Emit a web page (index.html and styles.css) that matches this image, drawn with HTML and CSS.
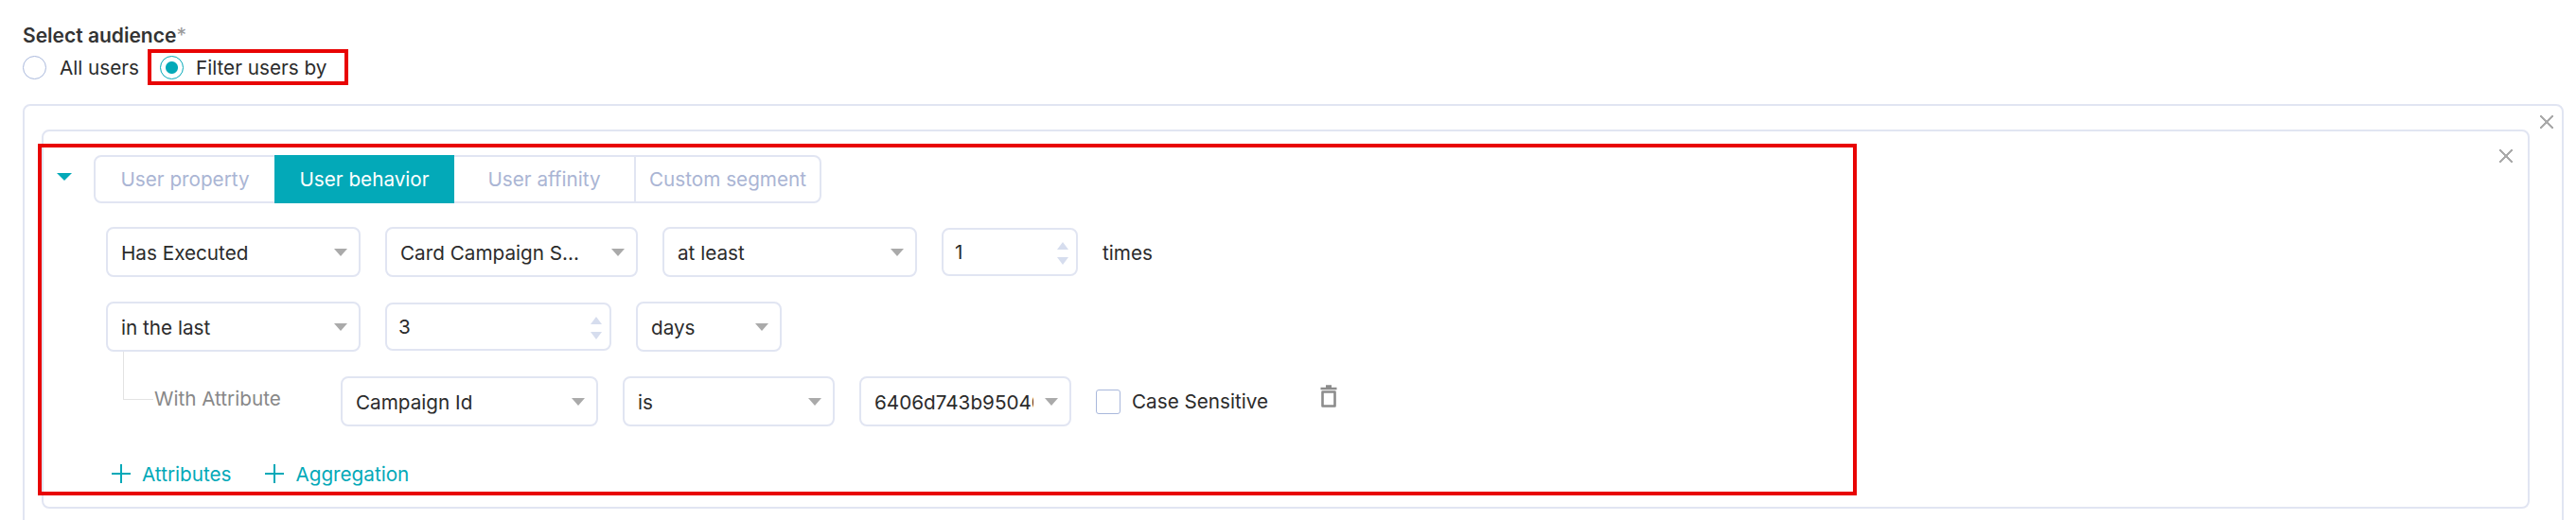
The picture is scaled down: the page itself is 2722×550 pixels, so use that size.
FILE: index.html
```html
<!DOCTYPE html>
<html lang="en">
<head>
  <meta charset="UTF-8" />
  <title>Select audience</title>
  <link rel="stylesheet" href="styles.css">
</head>
<body>
  <div class="page">

    <div class="field-label">Select audience<span class="required">*</span></div>
    <div class="radio-row">
      <div class="radio-option">
        <span class="radio"></span>
        <span>All users</span>
      </div>
      <div class="radio-option selected">
        <span class="radio checked"></span>
        <span>Filter users by</span>
      </div>
    </div>

    <div class="outer-box">
      <span class="close close-outer"></span>

      <div class="inner-box">
        <span class="close close-inner"></span>
        <div class="highlight"></div>

        <div class="rule-head">
          <span class="caret"></span>
          <div class="tabs">
            <div class="tab tab-a">User property</div>
            <div class="tab tab-b active">User behavior</div>
            <div class="tab tab-c">User affinity</div>
            <div class="tab tab-d">Custom segment</div>
          </div>
        </div>

        <!-- Filter rows -->
        <div class="rule-body">
          <div class="row">
            <div class="select w-269"><span class="value">Has Executed</span></div>
            <div class="select w-267"><span class="value">Card Campaign S...</span></div>
            <div class="select w-269"><span class="value">at least</span></div>
            <div class="number w-144"><span>1</span><span class="stepper"></span></div>
            <span class="suffix">times</span>
          </div>
          <div class="row">
            <div class="select w-269"><span class="value">in the last</span></div>
            <div class="number w-239"><span>3</span><span class="stepper"></span></div>
            <div class="select w-154"><span class="value">days</span></div>
          </div>
          <div class="row row-attr">
            <span class="connector"></span>
            <span class="attr-label">With Attribute</span>
            <div class="select w-272"><span class="value">Campaign Id</span></div>
            <div class="select w-224"><span class="value">is</span></div>
            <div class="select w-224"><span class="value clipped">6406d743b95040</span></div>
            <div class="check-option">
              <span class="checkbox"></span>
              <span>Case Sensitive</span>
            </div>
            <svg class="trash" width="18" height="24" viewBox="0 0 18 24">
              <path d="M6 1.5h6M0.5 4h17" stroke="#8c8c8c" stroke-width="2.4" fill="none" />
              <path d="M2.5 7.5h13v15h-13z" stroke="#8c8c8c" stroke-width="2.6" fill="none" stroke-linejoin="round" />
            </svg>
          </div>
        </div>

        <div class="add-row">
          <div class="add-link"><span class="plus"></span>Attributes</div>
          <div class="add-link"><span class="plus"></span>Aggregation</div>
        </div>
      </div>
    </div>

  </div>
</body>
</html>
```

FILE: styles.css
```css
body {
  margin: 0;
  background: #fff;
  font-family: 'Inter', sans-serif;
  font-size: 20.7px;
  color: #2b2b2b;
}

.page {
  height: 550px;
  overflow: hidden;
  box-sizing: border-box;
  padding: 25px 13px 0 24px;
}

.field-label {
  height: 26px;
  line-height: 26px;
  font-size: 21px;
  font-weight: 600;
  color: #333;
}

.required {
  color: #999;
  font-weight: 400;
}

.radio-row {
  display: flex;
  align-items: center;
  margin-top: 1px;
  height: 38px;
}

.radio-option {
  display: flex;
  align-items: center;
  gap: 14px;
  width: 132px;
  height: 38px;
  box-sizing: border-box;
  white-space: nowrap;
}

.radio-option.selected {
  gap: 13px;
  width: 212px;
  padding-left: 9px;
  border: 4px solid #e80404;
}

.radio {
  width: 25px;
  height: 25px;
  box-sizing: border-box;
  border: 1px solid #a9b8dc;
  border-radius: 50%;
  background: #fff;
}

.radio.checked {
  border-color: #03a9b8;
  background: radial-gradient(circle, #03a9b8 0 6px, #fff 7px);
}

.outer-box {
  position: relative;
  box-sizing: border-box;
  height: 600px;
  margin-top: 20px;
  padding: 25px 34px 0 18px;
  border: 2px solid #e1e5f2;
  border-radius: 8px;
}

.inner-box {
  position: relative;
  box-sizing: border-box;
  height: 401px;
  padding: 25px 0 0 14px;
  border: 2px solid #e1e5f2;
  border-radius: 8px;
}

.close {
  position: absolute;
  width: 14px;
  height: 14px;
  background:
    linear-gradient(45deg, transparent 46%, #aaa 46% 54%, transparent 54%),
    linear-gradient(-45deg, transparent 46%, #aaa 46% 54%, transparent 54%);
}

.close-outer {
  top: 10px;
  right: 9px;
}

.close-inner {
  top: 19px;
  right: 16px;
}

.highlight {
  position: absolute;
  left: -6px;
  top: 13px;
  width: 1922px;
  height: 372px;
  box-sizing: border-box;
  border: 4px solid #e80404;
  pointer-events: none;
}

.rule-head {
  display: flex;
  align-items: flex-start;
}

.caret {
  width: 0;
  height: 0;
  margin: 19px 23px 0 0;
  border-left: 8px solid transparent;
  border-right: 8px solid transparent;
  border-top: 8px solid #03a9b8;
}

.tabs {
  display: flex;
  height: 51px;
  box-sizing: border-box;
  border: 2px solid #e1e5f2;
  border-radius: 8px;
}

.tab {
  display: flex;
  align-items: center;
  justify-content: center;
  box-sizing: border-box;
  color: #aab5d4;
  white-space: nowrap;
}

.tab-a { width: 189px; }
.tab-b { width: 190px; }
.tab-c { width: 192px; border-right: 2px solid #e1e5f2; }
.tab-d { width: 194px; }

.tab.active {
  margin: -2px 0;
  background: #03a9b8;
  color: #fff;
}

.rule-body {
  display: flex;
  flex-direction: column;
  gap: 26px;
  margin: 25px 0 0 52px;
}

.row {
  position: relative;
  display: flex;
  align-items: center;
  gap: 26px;
  height: 53px;
}

.select,
.number {
  position: relative;
  display: flex;
  align-items: center;
  box-sizing: border-box;
  height: 53px;
  padding: 2px 0 0 14px;
  border: 2px solid #e1e5f2;
  border-radius: 8px;
}

.number {
  height: 51px;
  padding: 0 0 0 12px;
}

.select::after {
  content: "";
  position: absolute;
  top: 21px;
  right: 12px;
  border-left: 7px solid transparent;
  border-right: 7px solid transparent;
  border-top: 8px solid #aaa;
}

.stepper {
  position: absolute;
  top: 13px;
  right: 8px;
  width: 0;
  height: 0;
  border-left: 6px solid transparent;
  border-right: 6px solid transparent;
  border-bottom: 8px solid #d6ddee;
}

.stepper::after {
  content: "";
  position: absolute;
  top: 16px;
  left: -6px;
  border-left: 6px solid transparent;
  border-right: 6px solid transparent;
  border-top: 8px solid #d6ddee;
}

.w-144 { width: 144px; }
.w-154 { width: 154px; }
.w-224 { width: 224px; }
.w-239 { width: 239px; }
.w-267 { width: 267px; }
.w-269 { width: 269px; }
.w-272 { width: 272px; }

.value.clipped {
  display: block;
  width: 168px;
  overflow: hidden;
  white-space: nowrap;
}

.suffix {
  margin-top: 2px;
}

.connector {
  position: absolute;
  left: 18px;
  top: -26px;
  width: 31px;
  height: 50px;
  border-left: 1px solid #e3e3e3;
  border-bottom: 1px solid #e3e3e3;
}

.attr-label {
  width: 171px;
  margin-left: 51px;
  margin-top: -6px;
  color: #888;
  white-space: nowrap;
}

.check-option {
  display: flex;
  align-items: center;
  gap: 12px;
  width: 211px;
  white-space: nowrap;
}

.checkbox {
  width: 26px;
  height: 26px;
  box-sizing: border-box;
  border: 1px solid #a9b8dc;
  border-radius: 3px;
}

.trash {
  margin: -12px 0 0 0;
}

.add-row {
  display: flex;
  gap: 36px;
  margin: 38px 0 0 58px;
}

.add-link {
  display: flex;
  align-items: center;
  gap: 12px;
  height: 24px;
  color: #03a9b8;
}

.plus {
  width: 20px;
  height: 20px;
  background:
    linear-gradient(#03a9b8, #03a9b8) center / 100% 2px no-repeat,
    linear-gradient(#03a9b8, #03a9b8) center / 2px 100% no-repeat;
}
```
